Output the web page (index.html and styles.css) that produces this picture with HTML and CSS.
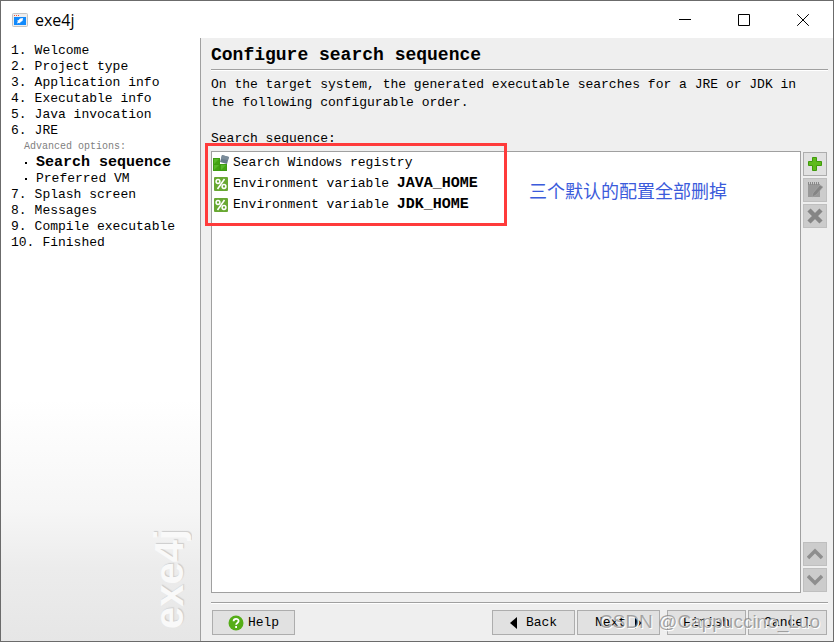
FILE: index.html
```html
<!DOCTYPE html>
<html lang="en">
<head>
<meta charset="utf-8">
<title>exe4j</title>
<link rel="stylesheet" href="styles.css">
</head>
<body>
<div class="window">
  <header class="titlebar">
    <svg class="app-icon" width="16" height="14" viewBox="0 0 16 14" aria-hidden="true">
      <rect x=".5" y=".5" width="15" height="13" rx="1" fill="#eee" stroke="#c4c4c4"/>
      <rect x="2" y="4" width="12" height="8" fill="#118afc"/>
      <path d="M2 2h1v1H2zM4 2h1v1H4zM6 2h1v1H6z" fill="#f0523c"/>
      <path d="M11 5l-3 .6-1.500 1.600-1.500.4.8.7-.8 2.200 2.200-.8.8.8.5-1.600L10.500 8z" fill="#fff"/>
    </svg>
    <span class="app-name">exe4j</span>
    <div class="window-controls">
      <button type="button" aria-label="Minimize"><svg width="12" height="12" viewBox="0 0 12 12"><path d="M0 5.500h12"/></svg></button>
      <button type="button" aria-label="Maximize"><svg width="12" height="12" viewBox="0 0 12 12"><path d="M.5.5h11v11H.5z"/></svg></button>
      <button type="button" aria-label="Close"><svg width="12" height="12" viewBox="0 0 12 12"><path d="M.2.2l11.600 11.600M11.800.2L.2 11.800"/></svg></button>
    </div>
  </header>
  <div class="content">
    <nav class="sidebar">
      <ul class="steps">
        <li><span>1.</span>Welcome</li>
        <li><span>2.</span>Project type</li>
        <li><span>3.</span>Application info</li>
        <li><span>4.</span>Executable info</li>
        <li><span>5.</span>Java invocation</li>
        <li><span>6.</span>JRE</li>
        <li class="advanced">Advanced options:</li>
        <li class="sub current">Search sequence</li>
        <li class="sub">Preferred VM</li>
        <li><span>7.</span>Splash screen</li>
        <li><span>8.</span>Messages</li>
        <li><span>9.</span>Compile executable</li>
        <li><span>10.</span>Finished</li>
      </ul>
      <div class="brand">exe4j</div>
    </nav>
    <main class="main">
      <h1>Configure search sequence</h1>
      <p class="intro">On the target system, the generated executable searches for a JRE or JDK in<br>the following configurable order.</p>
      <h2 id="list-label">Search sequence:</h2>
      <div class="list-area">
        <div class="list-box">
          <ul class="entries" aria-labelledby="list-label">
            <li>
              <svg width="16" height="16" viewBox="0 0 16 16" aria-hidden="true">
                <path d="M0 3h7v6h7v7H0z" fill="#3f9c13"/>
                <path d="M1 4h5v5H1zM1 10h5v5H1zM8 10h5v5H8z" fill="#58b82a"/>
                <path d="M1 9l5-5v5zM1 15l5-5v5zM8 15l5-5v5z" fill="#43a313"/>
                <path d="M9 0l7 2-2 7-7-2z" fill="#667989"/>
                <path d="M9 0l7 2-1 3-7-1z" fill="#7b8c9a"/>
              </svg>
              <span>Search Windows registry</span>
            </li>
            <li>
              <svg width="16" height="16" viewBox="0 0 16 16" aria-hidden="true">
                <rect x="1" y="1" width="14" height="14" rx="1" fill="#68a832"/>
                <path d="M11.500 3l-7 10" stroke="#fff" stroke-width="1.600"/>
                <g fill="none" stroke="#fff" stroke-width="1.500"><circle cx="5" cy="5.500" r="1.900"/><circle cx="11" cy="10.500" r="1.900"/></g>
              </svg>
              <span>Environment variable <b>JAVA_HOME</b></span>
            </li>
            <li>
              <svg width="16" height="16" viewBox="0 0 16 16" aria-hidden="true">
                <rect x="1" y="1" width="14" height="14" rx="1" fill="#68a832"/>
                <path d="M11.500 3l-7 10" stroke="#fff" stroke-width="1.600"/>
                <g fill="none" stroke="#fff" stroke-width="1.500"><circle cx="5" cy="5.500" r="1.900"/><circle cx="11" cy="10.500" r="1.900"/></g>
              </svg>
              <span>Environment variable <b>JDK_HOME</b></span>
            </li>
          </ul>
          <div class="highlight"></div>
          <div class="note" lang="zh-CN">三个默认的配置全部删掉</div>
        </div>
        <div class="tools">
          <button type="button" aria-label="Add"><svg width="16" height="16" viewBox="0 0 16 16"><path d="M5.500 1.500h4v4h5v4h-5v5h-4v-5h-4v-4h4z" fill="#5fba1c" stroke="#3f9a0b"/></svg></button>
          <button type="button" aria-label="Edit" disabled><svg width="16" height="16" viewBox="0 0 16 16"><path d="M1 2h12v13H1z" fill="#999"/><path d="M1.500 0v3M3.500 0v3M5.500 0v3M7.500 0v3M9.500 0v3M11.500 0v3" stroke="#888"/><path d="M13 3l3 2-7 8-4 2 1-4z" fill="#858585" stroke="#aaa" stroke-width=".6"/></svg></button>
          <button type="button" aria-label="Remove" disabled><svg width="16" height="16" viewBox="0 0 16 16"><path d="M2 2l12 12M14 2L2 14" stroke="#858585" stroke-width="4.500"/></svg></button>
          <button type="button" class="move-up" aria-label="Move up" disabled><svg width="16" height="16" viewBox="0 0 16 16"><path d="M1 12l7-7 7 7" fill="none" stroke="#8e8e8e" stroke-width="3.500"/></svg></button>
          <button type="button" aria-label="Move down" disabled><svg width="16" height="16" viewBox="0 0 16 16"><path d="M1 4l7 7 7-7" fill="none" stroke="#8e8e8e" stroke-width="3.500"/></svg></button>
        </div>
      </div>
      <footer class="footer">
        <button type="button" class="push"><svg width="16" height="16" viewBox="0 0 16 16" aria-hidden="true"><circle cx="8" cy="8" r="7.500" fill="#55ad18"/><path d="M5.600 6.200c0-3.200 5-3.100 5-.2 0 1.900-2.500 1.900-2.500 3.700M8.100 11v2" fill="none" stroke="#fff" stroke-width="1.800"/></svg>Help</button>
        <button type="button" class="push back"><svg width="8" height="12" viewBox="0 0 8 12" aria-hidden="true"><path d="M7 0v12L0 6z"/></svg>Back</button>
        <button type="button" class="push next">Next<svg width="8" height="12" viewBox="0 0 8 12" aria-hidden="true"><path d="M1 0v12l7-6z"/></svg></button>
        <button type="button" class="push finish">Finish</button>
        <button type="button" class="push cancel">Cancel</button>
      </footer>
    </main>
  </div>
  <div class="watermark">CSDN @Cappuccino_Luo</div>
</div>
</body>
</html>
```
FILE: styles.css
```css
* {
  box-sizing: border-box;
}

body {
  margin: 0;
  color: #000;
  font: 13px/16px "Liberation Mono", monospace;
}

button {
  padding: 0;
  font: inherit;
  color: inherit;
}

b {
  font-size: 15px;
}

svg {
  display: block;
  flex: none;
}

ul {
  margin: 0;
  padding: 0;
  list-style: none;
}

.window {
  position: relative;
  display: flex;
  flex-direction: column;
  min-height: 100vh;
  border: 1px solid #6b6b6b;
  background: #fff;
}

.titlebar {
  display: flex;
  align-items: center;
  gap: 7px;
  height: 37px;
  padding-left: 11px;
}

.app-name {
  font: 16px/20px "Open Sans", sans-serif;
}

.window-controls {
  display: flex;
  margin-left: auto;
  padding-right: 1px;
}

.window-controls button {
  display: grid;
  place-items: center;
  width: 59px;
  height: 36px;
  border: 0;
  background: none;
}

.window-controls path {
  fill: none;
  stroke: #000;
}

.content {
  display: flex;
  flex: 1;
}

.sidebar {
  display: flex;
  flex-direction: column;
  justify-content: space-between;
  width: 200px;
  padding: 5px 11px 12px 10px;
  border-right: 1px solid #a0a0a0;
  background: linear-gradient(#fff 60%, #f6f6f6 78%, #ececec 88%, #e6e6e6);
}

.steps li {
  white-space: nowrap;
}

.steps span {
  margin-right: 8px;
}

.steps .advanced {
  padding-left: 13px;
  color: #808080;
  font-size: 10px;
}

.steps .sub {
  display: flex;
  align-items: center;
  gap: 9px;
  padding-left: 14px;
}

.steps .sub::before {
  width: 2px;
  height: 2px;
  background: #000;
  content: "";
}

.steps .current {
  font-size: 15px;
  font-weight: bold;
}

.brand {
  align-self: flex-end;
  color: #f9f9f9;
  font: bold 40px/40px "Liberation Sans", sans-serif;
  text-shadow: 1px 1px 1px #ccc;
  writing-mode: vertical-rl;
  transform: rotate(180deg);
}

.main {
  display: flex;
  flex: 1;
  flex-direction: column;
  min-width: 0;
  padding: 5px 5px 6px 10px;
  background: #efefef;
}

h1 {
  margin: 0;
  padding-bottom: 2px;
  border-bottom: 1px solid #a0a0a0;
  box-shadow: 0 1px #fff;
  font-size: 18px;
  line-height: 24px;
}

.intro {
  margin: 6px 0 18px;
  line-height: 18px;
}

h2 {
  margin: 0;
  font-size: 13px;
  font-weight: normal;
  line-height: 18px;
}

.list-area {
  display: flex;
  flex: 1;
  gap: 2px;
  margin-top: 3px;
  padding-right: 1px;
}

.list-box {
  position: relative;
  flex: 1;
  border: 1px solid #a0a0a0;
  background: #fff;
}

.entries li {
  display: flex;
  align-items: center;
  gap: 4px;
  height: 21px;
  padding-left: 1px;
}

.highlight {
  position: absolute;
  top: -9px;
  left: -7px;
  width: 302px;
  height: 83px;
  border: 3px solid #ff3b3b;
}

.note {
  position: absolute;
  top: 26px;
  left: 317px;
  color: #3b5bdb;
  font: 18px/24px "Noto Sans CJK SC", sans-serif;
}

.tools {
  display: flex;
  flex-direction: column;
  gap: 2px;
  padding: 1px 0;
}

.tools button {
  display: grid;
  place-items: center;
  width: 24px;
  height: 24px;
  border: 1px solid #adadad;
  background: #e1e1e1;
}

.tools button:disabled {
  border-color: #bfbfbf;
  background: #ccc;
}

.tools .move-up {
  margin-top: auto;
}

.footer {
  display: flex;
  gap: 2px;
  margin-top: 9px;
  padding: 7px 1px 0;
  border-top: 1px solid #a0a0a0;
  box-shadow: inset 0 1px #fff;
}

.push {
  display: flex;
  align-items: center;
  justify-content: center;
  gap: 4px;
  width: 83px;
  height: 25px;
  border: 1px solid #adadad;
  background: #e1e1e1;
}

.back {
  gap: 8px;
  margin-left: auto;
}

.next {
  gap: 8px;
}

.finish {
  width: 79px;
  margin-left: 5px;
}

.cancel {
  width: 79px;
}

.watermark {
  position: absolute;
  right: 13px;
  bottom: 7px;
  color: rgba(130, 130, 130, 0.7);
  font: 19px/24px "Liberation Sans", sans-serif;
  text-shadow: 1px 1px #fff;
  pointer-events: none;
}
```
